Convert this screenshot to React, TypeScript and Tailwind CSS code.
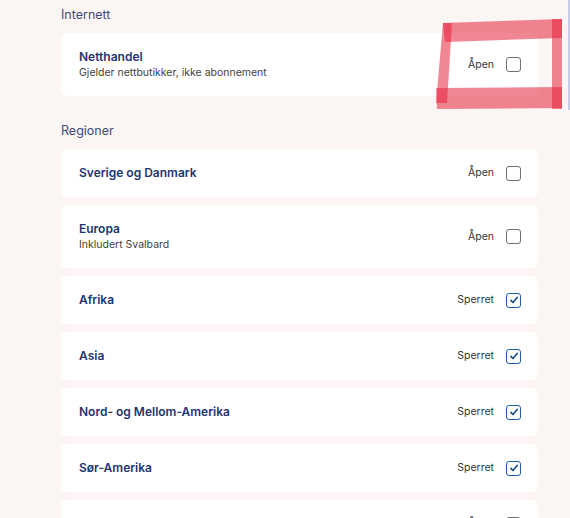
type Row = {
  title: string;
  subtitle?: string;
  blocked: boolean;
};

const internet: Row[] = [
  { title: 'Netthandel', subtitle: 'Gjelder nettbutikker, ikke abonnement', blocked: false },
];

const regions: Row[] = [
  { title: 'Sverige og Danmark', blocked: false },
  { title: 'Europa', subtitle: 'Inkludert Svalbard', blocked: false },
  { title: 'Afrika', blocked: true },
  { title: 'Asia', blocked: true },
  { title: 'Nord- og Mellom-Amerika', blocked: true },
  { title: 'Sør-Amerika', blocked: true },
  { title: 'Antarktis', blocked: false },
];

function Checkbox({ checked }: { checked: boolean }) {
  if (checked)
    return (
      <span className="flex h-[15px] w-[15px] items-center justify-center rounded-[3px] border-[1.5px] border-[#1f5ea6] bg-white">
        <svg viewBox="0 0 12 12" className="h-[10px] w-[10px]" fill="none">
          <path
            d="M2.2 6.4 4.8 9 9.8 3"
            stroke="#1b4f92"
            strokeWidth="2"
            strokeLinecap="round"
            strokeLinejoin="round"
          />
        </svg>
      </span>
    );
  return (
    <span className="block h-[15px] w-[15px] rounded-[3px] border-[1.5px] border-[#707070] bg-white" />
  );
}

function Card({ row }: { row: Row }) {
  return (
    <div className="flex items-center rounded-md bg-white py-[15px] pl-[18px] pr-[17px]">
      <div className="flex min-w-0 flex-1 flex-col">
        <span className="text-[12px] font-semibold leading-[18px] text-[#1d3570]">
          {row.title}
        </span>
        {row.subtitle && (
          <span className="mb-[2px] text-[10.5px] leading-[13px] text-[#3f3f46]">{row.subtitle}</span>
        )}
      </div>
      <span className="mr-[12px] text-[10.5px] text-[#353535]">{row.blocked ? 'Sperret' : 'Åpen'}</span>
      <Checkbox checked={row.blocked} />
    </div>
  );
}

function Section({ label, rows }: { label: string; rows: Row[] }) {
  return (
    <section>
      <h2 className="mb-2 text-[12.5px] leading-5 text-[#3d4b7c]">{label}</h2>
      <div className="flex flex-col gap-2">
        {rows.map((row) => (
          <Card key={row.title} row={row} />
        ))}
      </div>
    </section>
  );
}

export default function App() {
  return (
    <div
      className="relative h-[518px] overflow-hidden bg-[#fbf6f3] pl-[61px] pr-[32px] pt-[5px]"
      style={{ fontFamily: 'Inter, "Noto Sans", sans-serif' }}
    >
      <div className="flex flex-col gap-[25px]">
        <Section label="Internett" rows={internet} />
        <Section label="Regioner" rows={regions} />
      </div>
      {/* hand-drawn highlight from the screenshot */}
      <svg className="pointer-events-none absolute left-0 top-0 h-[518px] w-[570px]" viewBox="0 0 570 518">
        <rect x="568" y="0" width="2" height="110" fill="#c9cce6" />
        <g fill="#e5223c" fillOpacity="0.55">
          <polygon points="443,23 562,19 562,38 445,42" />
          <polygon points="443,23 452,23 447,103 436,103" />
          <polygon points="436,88 562,87 562,108 437,109" />
          <polygon points="552,19 562,19 562,109 552,109" />
        </g>
      </svg>
    </div>
  );
}
